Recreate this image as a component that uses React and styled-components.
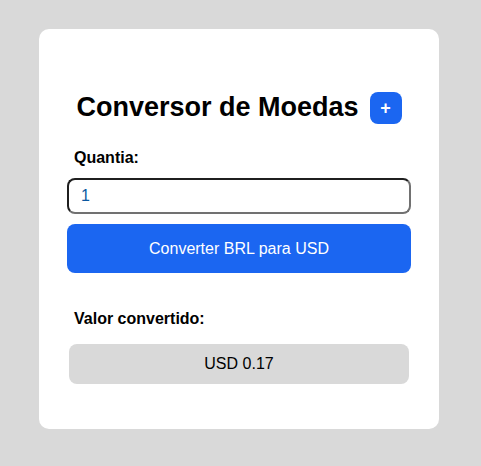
import React, { useState } from 'react';
import styled, { createGlobalStyle } from 'styled-components';

const RATE = 0.17;

const GlobalStyle = createGlobalStyle`
  html, body {
    margin: 0;
    padding: 0;
    background: #d9d9d9;
    font-family: "Liberation Sans", Arial, sans-serif;
  }
`;

export default function App() {
  const [amount, setAmount] = useState('1');
  const [result, setResult] = useState((1 * RATE).toFixed(2));

  const convert = () => {
    const value = parseFloat(amount) || 0;
    setResult((value * RATE).toFixed(2));
  };

  return (
    <Page>
      <GlobalStyle />
      <Card>
        <Header>
          <Title>Conversor de Moedas</Title>
          <AddButton type="button">+</AddButton>
        </Header>
        <Label htmlFor="amount">Quantia:</Label>
        <AmountInput
          id="amount"
          value={amount}
          onChange={e => setAmount(e.target.value)}
        />
        <ConvertButton type="button" onClick={convert}>
          Converter BRL para USD
        </ConvertButton>
        <Label as="div" spaced>Valor convertido:</Label>
        <Result>USD {result}</Result>
      </Card>
    </Page>
  );
}

const Page = styled.div`
  min-height: 466px;
  padding: 29px 0 0 39px;
  box-sizing: border-box;
  display: flex;
  align-items: flex-start;
`;

const Card = styled.div`
  width: 400px;
  height: 400px;
  box-sizing: border-box;
  background: #fff;
  border-radius: 10px;
  padding: 0 28px;
  display: flex;
  flex-direction: column;
`;

const Header = styled.div`
  margin-top: 62px;
  display: flex;
  align-items: center;
  justify-content: center;
  gap: 11px;
  height: 32px;
`;

const Title = styled.h1`
  margin: 0;
  font-size: 27px;
  line-height: 32px;
  font-weight: 700;
  color: #000;
`;

const AddButton = styled.button`
  width: 32px;
  height: 32px;
  border: none;
  border-radius: 8px;
  background: #1b66f1;
  color: #fff;
  font-family: inherit;
  font-size: 18px;
  font-weight: 700;
  line-height: 1;
  padding: 0;
  margin-top: 2px;
  cursor: pointer;
`;

const Label = styled.label`
  display: block;
  margin: ${p => (p.spaced ? '37px' : '26px')} 0 0 7px;
  font-size: 16px;
  line-height: 18px;
  font-weight: 700;
  color: #000;
`;

const AmountInput = styled.input`
  margin-top: 11px;
  height: 36px;
  box-sizing: border-box;
  width: 100%;
  border: 2px solid;
  border-color: #1f1f1f #717171 #717171 #1f1f1f;
  border-radius: 8px;
  padding: 0 12px;
  font-family: inherit;
  font-size: 16px;
  color: #0a58a0;
  outline: none;
`;

const ConvertButton = styled.button`
  margin-top: 10px;
  height: 49px;
  width: 100%;
  border: none;
  border-radius: 8px;
  background: #1b66f1;
  color: #fff;
  font-family: inherit;
  font-size: 16px;
  cursor: pointer;
`;

const Result = styled.div`
  margin: 16px 2px 0;
  height: 40px;
  border-radius: 8px;
  background: #d9d9d9;
  display: flex;
  align-items: center;
  justify-content: center;
  font-size: 16px;
  color: #000;
`;
